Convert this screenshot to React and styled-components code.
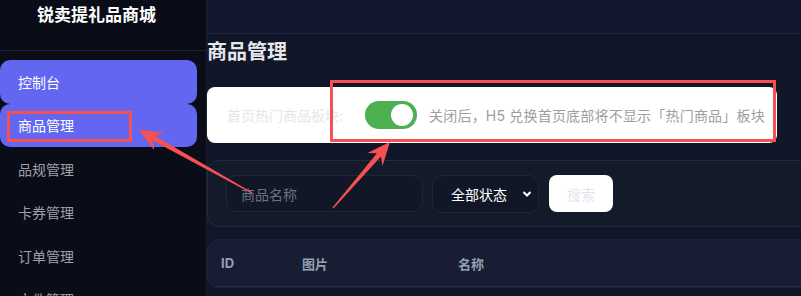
import * as React from "react";
import styled, { createGlobalStyle } from "styled-components";

const GlobalStyle = createGlobalStyle`
  html, body {
    margin: 0;
    padding: 0;
    background: #121629;
    overflow: hidden;
  }
  body {
    font-family: Inter, "Noto Sans CJK SC", "Noto Sans", sans-serif;
  }
  * {
    box-sizing: border-box;
  }
`;

const Page = styled.div`
  position: relative;
  display: flex;
  width: 801px;
  height: 296px;
  overflow: hidden;
`;

const Sidebar = styled.aside`
  flex: 0 0 207px;
  background: #0a0d17;
  border-right: 1px solid #1b2031;
  display: flex;
  flex-direction: column;
`;

const Brand = styled.div`
  flex: 0 0 51px;
  height: 51px;
  border-bottom: 1px solid #1d2232;
  display: flex;
  justify-content: center;
  padding-right: 13px;
  font-size: 17px;
  line-height: 30px;
  font-weight: 700;
  color: #ffffff;
`;

const Nav = styled.nav`
  flex-shrink: 0;
  display: flex;
  flex-direction: column;
  padding: 9px 9px 0 0;
`;

const NavItem = styled.div`
  flex: 0 0 43.5px;
  height: 43.5px;
  display: flex;
  align-items: center;
  padding-left: 18px;
  font-size: 14px;
  border-radius: 10px;
  color: ${(p) => (p.$active ? "#ffffff" : "#9ca0a8")};
  background: ${(p) => (p.$active ? "#6366f1" : "transparent")};
`;

const Main = styled.main`
  flex: 1;
  min-width: 0;
  display: flex;
  flex-direction: column;
  background: #121629;
`;

const TopBar = styled.header`
  height: 34px;
  flex: 0 0 34px;
  border-bottom: 1px solid #1f2538;
  background: #131830;
`;

const Content = styled.section`
  width: 680px;
  display: flex;
  flex-direction: column;
`;

const Title = styled.h1`
  margin: 4px 0 21px;
  font-size: 20px;
  line-height: 28px;
  font-weight: 700;
  color: #e5e7eb;
`;

const SettingCard = styled.div`
  width: 570px;
  height: 56px;
  background: #ffffff;
  border-radius: 8px;
  padding: 0 20px;
  display: flex;
  align-items: center;
  font-size: 14px;
  white-space: nowrap;
  & > * {
    flex-shrink: 0;
  }
`;

const SettingLabel = styled.span`
  color: #e3e6ec;
  margin-right: 22px;
`;

const Switch = styled.div`
  width: 52px;
  height: 28px;
  border-radius: 14px;
  background: #4caf50;
  display: flex;
  align-items: center;
  justify-content: flex-end;
  padding: 0 4px;
  margin-right: 12px;
  &::after {
    content: "";
    width: 22px;
    height: 22px;
    border-radius: 50%;
    background: #ffffff;
  }
`;

const Hint = styled.span`
  color: #9e9e9e;
  letter-spacing: 0.2px;
`;

const FilterCard = styled.div`
  margin-top: 17px;
  height: 67px;
  background: #131a2a;
  border: 1px solid #222a3b;
  border-radius: 12px;
  padding: 0 18px;
  display: flex;
  align-items: center;
  gap: 9px;
`;

const SearchInput = styled.div`
  width: 197px;
  height: 37px;
  border: 1px solid #1f2637;
  border-radius: 10px;
  background: #111726;
  padding-left: 14px;
  display: flex;
  align-items: center;
  font-size: 14px;
  color: #6b7280;
`;

const Select = styled.div`
  width: 107px;
  height: 38px;
  border: 1px solid #1f2637;
  border-radius: 10px;
  background: #111726;
  padding: 0 6px 0 18px;
  display: flex;
  align-items: center;
  justify-content: space-between;
  font-size: 14px;
  color: #ffffff;
`;

const Button = styled.div`
  margin-left: 1px;
  width: 64px;
  height: 37px;
  border-radius: 8px;
  background: #ffffff;
  display: flex;
  align-items: center;
  justify-content: center;
  font-size: 14px;
  color: #e2e5ec;
`;

const TableCard = styled.div`
  margin-top: 12px;
  background: #181d33;
  border: 1px solid #1d2337;
  border-radius: 12px;
  overflow: hidden;
`;

const HeadRow = styled.div`
  height: 47px;
  display: grid;
  grid-template-columns: 81px 156px 1fr;
  align-items: center;
  padding-left: 13px;
  border-bottom: 1px solid #262d44;
  font-size: 13px;
  font-weight: 700;
  color: #94a0b4;
`;

const Overlay = styled.svg`
  position: absolute;
  left: 0;
  top: 0;
  pointer-events: none;
`;

const RED = "#f75050";

function arrowPoints(tx, ty, hx, hy) {
  const dx = hx - tx;
  const dy = hy - ty;
  const len = Math.hypot(dx, dy);
  const ux = dx / len;
  const uy = dy / len;
  const px = -uy;
  const py = ux;
  const at = (d, w) => [hx - ux * d + px * w, hy - uy * d + py * w];
  const pts = [
    [tx + px * 0.6, ty + py * 0.6],
    at(17, 2.6),
    at(23, 10),
    [hx, hy],
    at(23, -10),
    at(17, -2.6),
    [tx - px * 0.6, ty - py * 0.6],
  ];
  return pts.map((p) => p.map((v) => v.toFixed(1)).join(",")).join(" ");
}

const menu = ["控制台", "商品管理", "品规管理", "卡券管理", "订单管理", "文件管理"];

export default function App() {
  return (
    <>
      <GlobalStyle />
      <Page>
        <Sidebar>
          <Brand>锐卖提礼品商城</Brand>
          <Nav>
            {menu.map((m, i) => (
              <NavItem key={m} $active={i < 2}>
                {m}
              </NavItem>
            ))}
          </Nav>
        </Sidebar>
        <Main>
          <TopBar />
          <Content>
            <Title>商品管理</Title>
            <SettingCard>
              <SettingLabel>首页热门商品板块:</SettingLabel>
              <Switch />
              <Hint>关闭后，H5 兑换首页底部将不显示「热门商品」板块</Hint>
            </SettingCard>
            <FilterCard>
              <SearchInput>商品名称</SearchInput>
              <Select>
                <span>全部状态</span>
                <svg width="10" height="8" viewBox="0 0 10 8">
                  <path d="M1.5 2 L5 5.5 L8.5 2" fill="none" stroke="#fff" strokeWidth="2" />
                </svg>
              </Select>
              <Button>搜索</Button>
            </FilterCard>
            <TableCard>
              <HeadRow>
                <span>ID</span>
                <span>图片</span>
                <span>名称</span>
              </HeadRow>
            </TableCard>
          </Content>
        </Main>
        <Overlay width="801" height="296" viewBox="0 0 801 296">
          <rect x="8.5" y="112.5" width="122" height="28" fill="none" stroke={RED} strokeWidth="3" />
          <rect x="331.5" y="81.5" width="443" height="59" fill="none" stroke={RED} strokeWidth="3" />
          <polygon points={arrowPoints(252, 193, 139, 130)} fill={RED} />
          <polygon points={arrowPoints(333, 208, 390, 142)} fill={RED} />
        </Overlay>
      </Page>
    </>
  );
}
